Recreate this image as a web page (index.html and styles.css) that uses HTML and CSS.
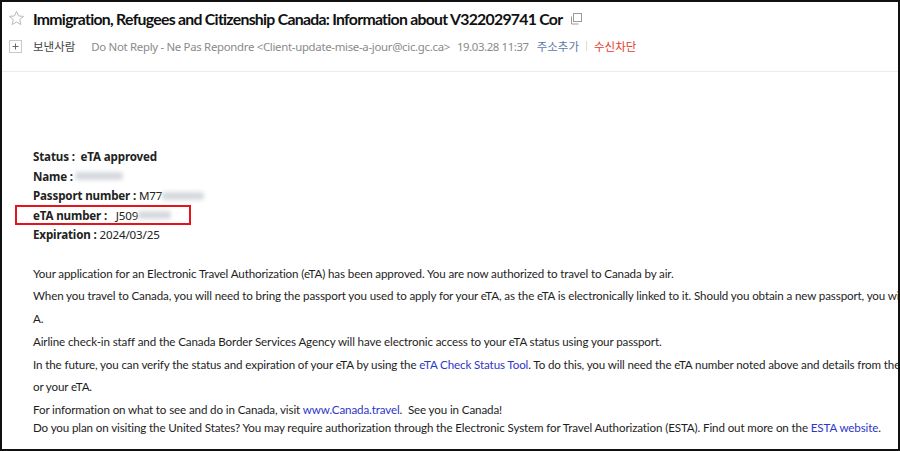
FILE: index.html
```html
<!DOCTYPE html>
<html lang="ko">
<head>
<meta charset="utf-8">
<link rel="stylesheet" href="styles.css">
</head>
<body>
<div class="frame">
  <div class="subject-row">
    <svg class="star" width="17" height="17" viewBox="0 0 16 16"><path d="M8 1.3 L9.9 5.6 L14.6 6 L11 9.1 L12.1 13.7 L8 11.3 L3.9 13.7 L5 9.1 L1.4 6 L6.1 5.6 Z" fill="none" stroke="#b5b5b5" stroke-width="0.9" stroke-linejoin="round"/></svg>
    <h1 class="subject">Immigration, Refugees and Citizenship Canada: Information about V322029741 Cor</h1>
    <svg class="copy" width="12" height="12" viewBox="0 0 12 12"><rect x="3.5" y="0.5" width="8" height="8" fill="none" stroke="#9a9a9a"/><path d="M1.5 3.5 V11 H8.5" fill="none" stroke="#9a9a9a"/></svg>
  </div>
  <div class="meta-row">
    <span class="plus-box"><svg width="13" height="13" viewBox="0 0 13 13"><rect x="0.5" y="0.5" width="12" height="12" fill="#fff" stroke="#c8c8c8"/><path d="M3.5 6.5 H9.5 M6.5 3.5 V9.5" stroke="#666" stroke-width="1"/></svg></span>
    <span class="from-label">보낸사람</span>
    <span class="from">Do Not Reply - Ne Pas Repondre &lt;Client-update-mise-a-jour@cic.gc.ca&gt;</span>
    <span class="date">19.03.28 11:37</span>
    <a class="add-addr">주소추가</a>
    <span class="bar"></span>
    <a class="block">수신차단</a>
  </div>
  <div class="sep"></div>
  <div class="mail-body">
    <div class="facts">
      <div class="fact"><b>Status :&nbsp; eTA approved</b></div>
      <div class="fact"><b>Name :</b> <span class="blur blur-name"></span></div>
      <div class="fact"><b>Passport number :</b> M77<span class="blur blur-pass"></span></div>
      <div class="fact highlight"><b>eTA number :</b>&nbsp;&nbsp; J509<span class="blur blur-eta"></span></div>
      <div class="fact"><b>Expiration :</b> 2024/03/25</div>
    </div>
    <div class="text">
      <p class="line">Your application for an Electronic Travel Authorization (eTA) has been approved. You are now authorized to travel to Canada by air.</p>
      <p class="line">When you travel to Canada, you will need to bring the passport you used to apply for your eTA, as the eTA is electronically linked to it. Should you obtain a new passport, you will need to apply for a new eT</p>
      <p class="line">A.</p>
      <p class="line">Airline check-in staff and the Canada Border Services Agency will have electronic access to your eTA status using your passport.</p>
      <p class="line">In the future, you can verify the status and expiration of your eTA by using the <a class="link">eTA Check Status Tool</a>. To do this, you will need the eTA number noted above and details from the passport you used to apply f</p>
      <p class="line">or your eTA.</p>
      <p class="line">For information on what to see and do in Canada, visit <a class="link">www.Canada.travel</a>.&nbsp; See you in Canada!</p>
      <p class="line last">Do you plan on visiting the United States? You may require authorization through the Electronic System for Travel Authorization (ESTA). Find out more on the <a class="link">ESTA website</a>.</p>
    </div>
  </div>
</div>
</body>
</html>
```
FILE: styles.css
```css
html, body {
  margin: 0;
  padding: 0;
  background: #fff;
}
.frame {
  width: 900px;
  height: 451px;
  box-sizing: border-box;
  border: 2px solid #111;
  overflow: hidden;
  font-family: "Noto Sans", "Noto Sans CJK KR", sans-serif;
  color: #222;
}
.subject-row {
  display: flex;
  align-items: center;
  height: 32px;
  padding-left: 6px;
}
.star {
  flex: none;
}
.subject {
  margin: 0 0 0 8px;
  font-family: "Lato", sans-serif;
  font-size: 15.8px;
  font-weight: 700;
  color: #111;
  letter-spacing: -0.72px;
  white-space: nowrap;
}
.copy {
  flex: none;
  margin-left: 8px;
  margin-top: 1px;
}
.meta-row {
  display: flex;
  align-items: center;
  height: 24px;
  padding-left: 7px;
  font-size: 11.4px;
  white-space: nowrap;
}
.plus-box {
  display: flex;
  width: 13px;
  height: 13px;
}
.from-label {
  margin-left: 11px;
  font-family: "Noto Sans CJK KR", sans-serif;
  color: #444;
  font-size: 11.5px;
}
.from {
  margin-left: 16px;
  color: #8a8a8a;
  letter-spacing: -0.3px;
}
.date {
  margin-left: 7px;
  color: #8a8a8a;
  letter-spacing: -0.4px;
}
.add-addr {
  margin-left: 8px;
  color: #6079a8;
  font-family: "Noto Sans CJK KR", sans-serif;
  font-size: 11.5px;
}
.bar {
  width: 1px;
  height: 10px;
  background: #ddd;
  margin: 0 7px;
}
.block {
  color: #e83a2e;
  font-family: "Noto Sans CJK KR", sans-serif;
  font-size: 11.5px;
}
.sep {
  height: 1px;
  background: #ededed;
  margin-top: 13px;
}
.mail-body {
  padding: 75px 0 0 31px;
}
.facts {
  font-size: 11.6px;
  letter-spacing: -0.15px;
}
.fact {
  height: 19.5px;
  line-height: 19.5px;
  display: flex;
  align-items: center;
  white-space: pre;
}
.fact b {
  font-weight: 700;
}
.highlight {
  position: relative;
}
.highlight::after {
  content: "";
  position: absolute;
  left: -18px;
  top: -1px;
  width: 172px;
  height: 16px;
  border: 2px solid #e3141b;
}
.blur {
  display: inline-block;
  height: 8px;
  background: #d5d8dd;
  filter: blur(2px);
  border-radius: 3px;
}
.blur-name { width: 48px; margin-left: 2px; }
.blur-pass { width: 42px; }
.blur-eta { width: 33px; }
.text {
  margin-top: 18px;
  font-family: "Lato", sans-serif;
  font-size: 11.6px;
  letter-spacing: -0.12px;
  color: #1e1e1e;
}
.line {
  margin: 0;
  height: 22.8px;
  line-height: 22.8px;
  white-space: nowrap;
}
.line.last {
  margin-top: -5px;
}
.link {
  color: #2f36c8;
}
```
